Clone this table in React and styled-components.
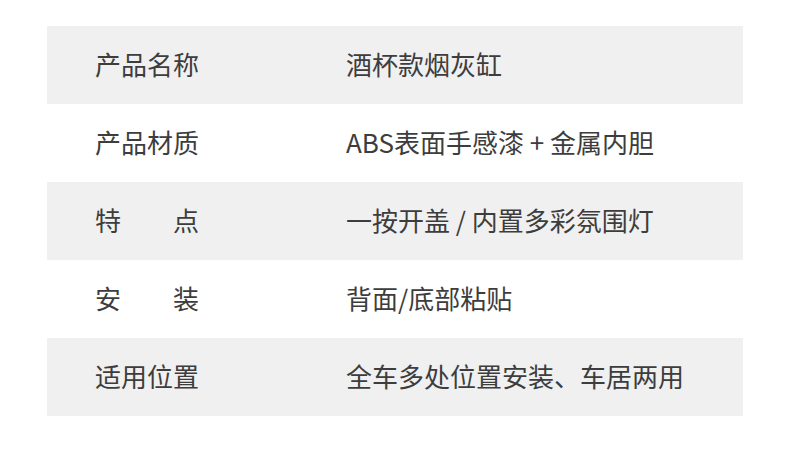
import React from "react";
import styled, { createGlobalStyle } from "styled-components";

const specs = [
  { label: "产品名称", value: "酒杯款烟灰缸" },
  { label: "产品材质", value: "ABS表面手感漆 + 金属内胆" },
  { label: "特点", value: "一按开盖 / 内置多彩氛围灯" },
  { label: "安装", value: "背面/底部粘贴" },
  { label: "适用位置", value: "全车多处位置安装、车居两用" },
];

const GlobalStyle = createGlobalStyle`
  html, body {
    margin: 0;
    padding: 0;
    background: #ffffff;
  }
  body {
    font-family: "Noto Sans CJK SC", "Noto Sans", sans-serif;
  }
`;

const Page = styled.div`
  width: 790px;
  height: 476px;
  padding: 26px 47px 0;
  box-sizing: border-box;
`;

const Table = styled.div`
  display: flex;
  flex-direction: column;
`;

const Row = styled.div`
  display: flex;
  align-items: center;
  height: 78px;
  padding: 0 0 2px 48px;
  box-sizing: border-box;
  background: ${(p) => (p.$shaded ? "#f0f0f0" : "#ffffff")};
  color: #3d3d3d;
  font-size: 26px;
  line-height: 1;
`;

const Label = styled.div`
  width: 104px;
  margin-right: 147px;
  text-align: justify;
  text-align-last: justify;
  white-space: nowrap;
`;

const Value = styled.div`
  white-space: nowrap;
`;

export default function App() {
  return (
    <>
      <GlobalStyle />
      <Page>
        <Table>
          {specs.map((s, i) => (
            <Row key={s.label} $shaded={i % 2 === 0}>
              <Label>{s.label}</Label>
              <Value>{s.value}</Value>
            </Row>
          ))}
        </Table>
      </Page>
    </>
  );
}
